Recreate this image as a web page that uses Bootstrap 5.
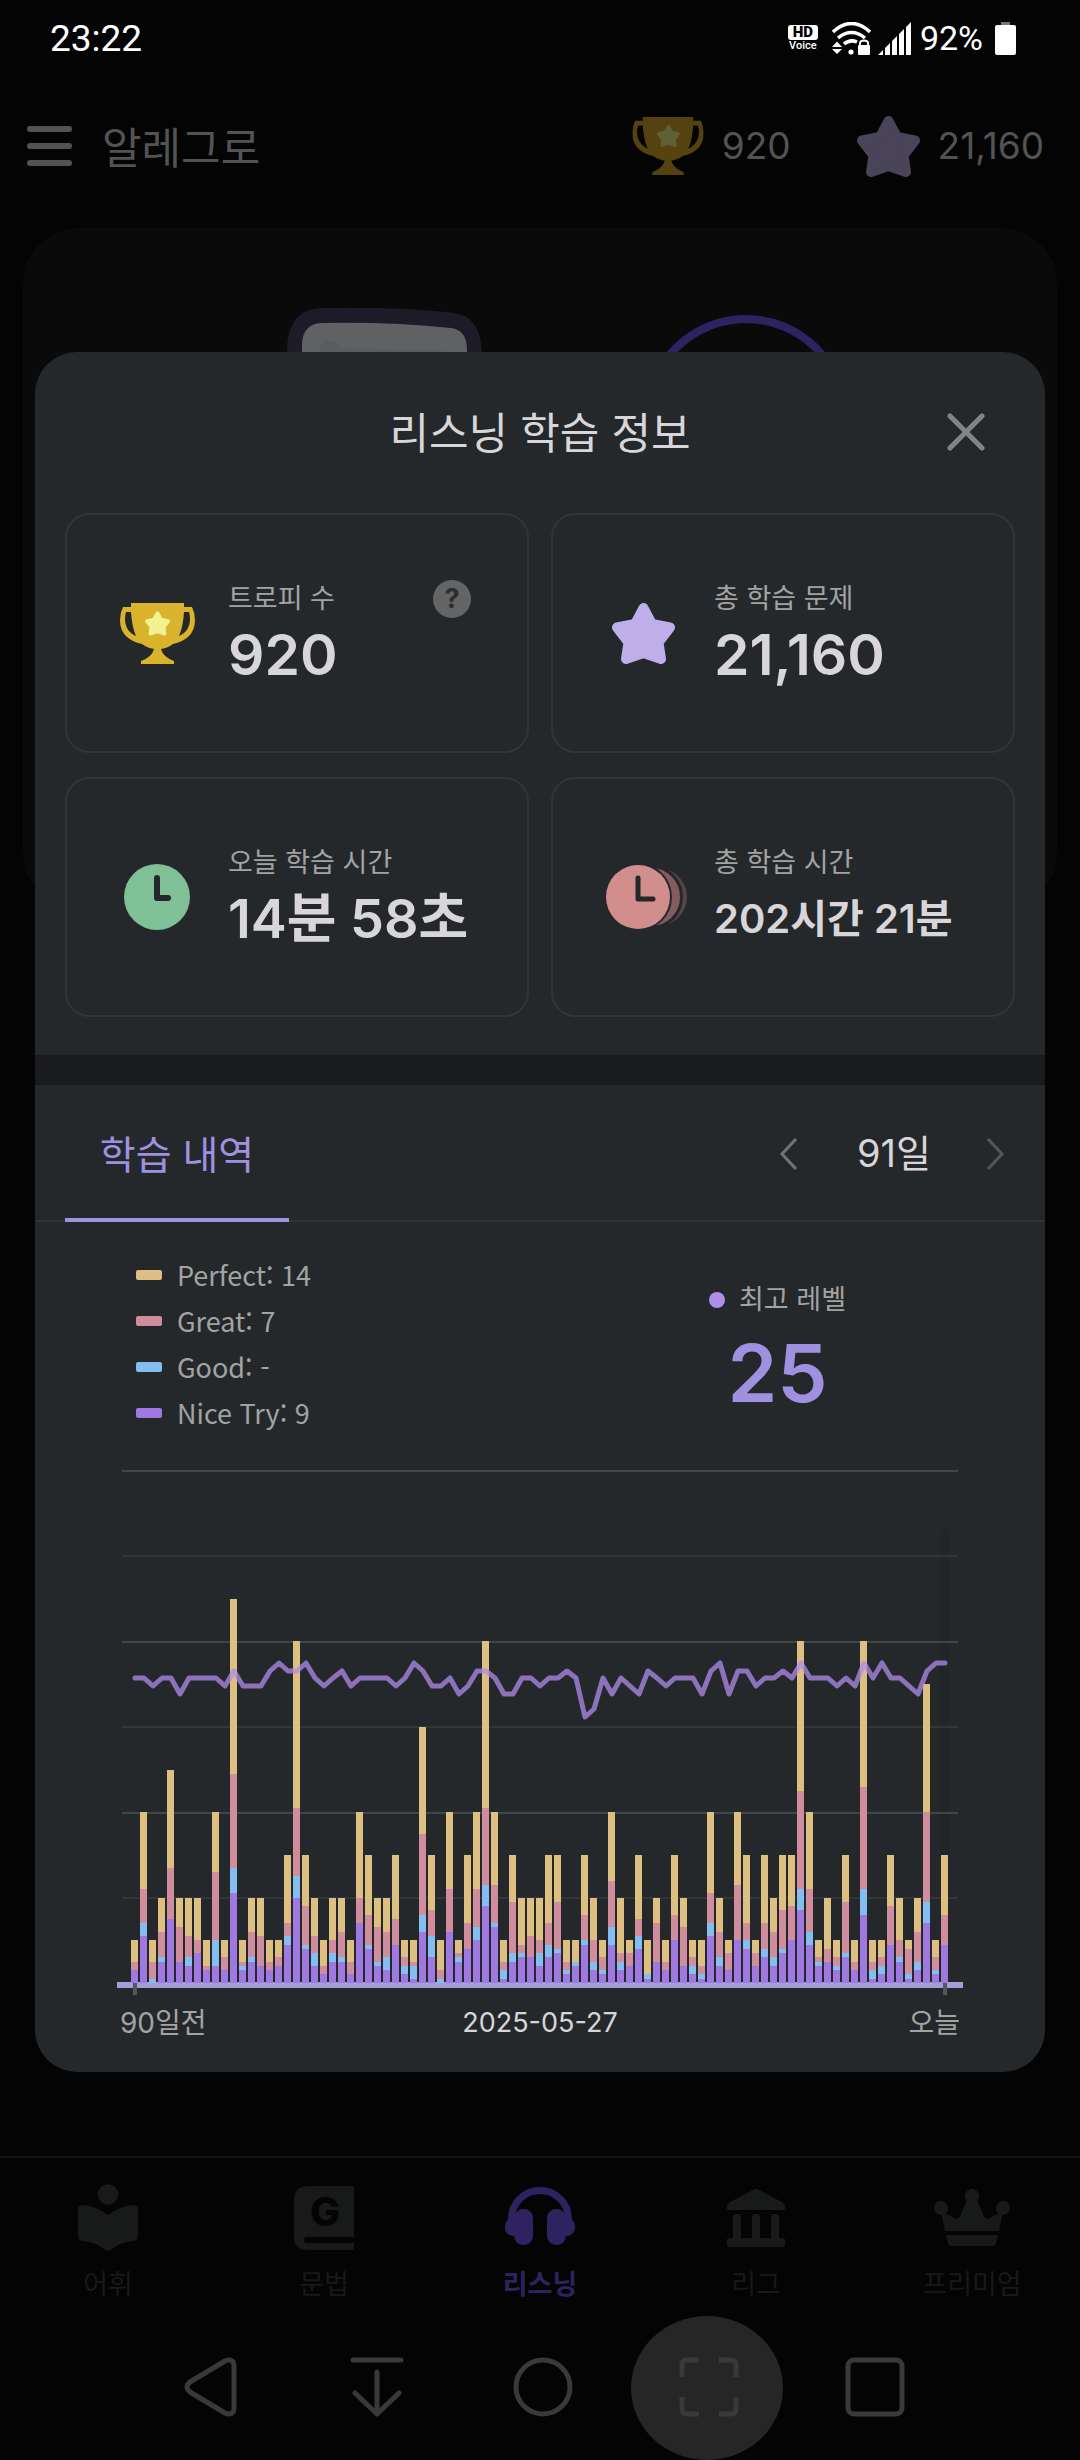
<!DOCTYPE html>
<html lang="ko">
<head>
<meta charset="utf-8">
<meta name="viewport" content="width=device-width, initial-scale=1">
<title>리스닝 학습 정보</title>
<link href="https://cdn.jsdelivr.net/npm/bootstrap@5.3.0/dist/css/bootstrap.min.css" rel="stylesheet">
<style>
  :root { --ink: #d8d6d8; --muted: #a2a3a3; --violet: #a091e0; --panel: #25282b; --rule: #323538; }
  body { background: #040404; color: var(--ink); font-family: Inter, "Noto Sans CJK KR", sans-serif; }
  svg { display: block; flex: none; }
  button { background: none; border: 0; padding: 0; color: inherit; }
  .screen { min-height: 100vh; }

  .status-bar { height: 74px; padding: 3px 64px 0 50px; color: #fff; font-family: Roboto, sans-serif; font-size: 37px; }
  .status-icons { gap: 7px; font-size: 34px; }
  .hd-voice { width: 30px; margin-right: 7px; line-height: 12px; font-size: 11px; font-weight: 500; }
  .hd-box { background: #fff; color: #000; border-radius: 3px; font-size: 15px; line-height: 15px; font-weight: 900; }
  .percent { margin: 0 5px 0 2px; }

  .app-header { height: 144px; padding: 0 36px 0 27px; color: #535354; font-size: 37px; }
  .app-name { font-size: 43px; line-height: 60px; padding-top: 4px; margin-left: 30px; }
  .score { gap: 18px; }
  .score-gap { margin-left: 66px; }

  .lesson-card { background: #0b0a0b; border-radius: 56px; margin: 10px 23px 0; height: 680px; }

  .info-dialog { top: 352px; left: 35px; right: 35px; background: var(--panel); border-radius: 42px; }
  .dialog-head { height: 161px; }
  .dialog-title { font-size: 43px; line-height: 60px; font-weight: 400; }
  .dialog-close { right: 60px; top: 61px; }
  .tiles { display: grid; grid-template-columns: repeat(2, minmax(0, 1fr)); gap: 24px 22px; padding: 0 30px 38px; }
  .tile { height: 240px; border: 2px solid var(--rule); border-radius: 24px; padding-right: 56px; }
  .tile-mark { width: 100px; margin: 0 21px 0 40px; }
  .tile-text { padding-top: 4px; }
  .tile-label { height: 40px; font-size: 27px; line-height: 40px; color: var(--muted); }
  .tile-value { height: 72px; font-size: 57px; line-height: 72px; font-weight: 600; white-space: nowrap; }
  .tile-value-md { font-size: 54px; }
  .tile-value-sm { font-size: 40px; }
  .help-btn { width: 38px; height: 38px; background: #636463; color: #2b2e30; font-size: 27px; line-height: 38px; font-weight: 700; }
  .divider-band { height: 30px; background: #1a1b1e; }

  .tab-row { height: 137px; padding: 0 40px 0 30px; border-bottom: 2px solid var(--rule); }
  .tab-on { width: 224px; margin-bottom: -2px; padding-top: 8px; border-bottom: 4px solid var(--violet); color: var(--violet); font-size: 39px; text-decoration: none; }
  .period { gap: 54px; padding-top: 2px; font-size: 38px; }
  .period span { padding-left: 4px; }

  .summary { padding: 30px 82px 0; height: 248px; }
  .legend-list { margin-left: 19px; font-family: "Noto Sans CJK KR", sans-serif; font-size: 27px; color: var(--muted); }
  .legend-list li { height: 46px; line-height: 46px; gap: 15px; }
  .swatch { width: 26px; height: 10px; border-radius: 2px; }
  .sw-perfect { background: #debf82; } .sw-great { background: #d08d9d; }
  .sw-good { background: #84bdf0; } .sw-nice { background: #a079e0; }
  .best { margin: 26px 117px 0 0; font-size: 27px; color: var(--muted); }
  .best-label { height: 44px; gap: 14px; }
  .best-dot { width: 16px; height: 16px; background: #ad8fea; border-radius: 50%; }
  .best-score { font-size: 80px; line-height: 102px; font-weight: 600; color: var(--violet); }
  .chart-box { padding: 0 82px; }
  .axis { padding: 5px 85px 26px; font-size: 28px; line-height: 46px; color: var(--muted); }
  .axis > span { flex: 1 1 0; }
  .axis .axis-date { font-size: 27px; color: #d6d6d6; }

  .tab-bar { height: 160px; border-top: 2px solid #0f1312; padding-top: 25px; }
  .tab-bar a { flex: 1 1 0; color: #181919; font-size: 27px; line-height: 44px; text-decoration: none; }
  .tab-bar a.current { color: #2e2360; font-weight: 700; }
  .tab-bar svg { margin-bottom: 10px; fill: currentColor; }

  .system-nav { height: 144px; padding-left: 6px; color: #393939; }
  .system-nav button { width: 166px; height: 144px; padding-bottom: 2px; }
  .system-nav svg { fill: none; stroke: currentColor; stroke-width: 5; stroke-linecap: round; stroke-linejoin: round; }
  .system-nav .pressed { width: 152px; margin: 0 9px 0 5px; padding-left: 4px; background: #262626; border-radius: 50%; }
</style>
</head>
<body>
<svg width="0" height="0" class="position-absolute" aria-hidden="true">
  <symbol id="trophy" viewBox="0 0 75 61">
    <path fill-rule="evenodd" d="M11 0H64V4H72Q75 10 75 17C75 31 66 38 53 41Q48 45 41 46Q43 54 54 58V61H21V58Q32 54 34 46Q27 45 22 41C9 38 0 31 0 17Q0 10 3 4H11ZM6 9Q5 12 5 16C5 24 9 30 16 33Q12 24 11 9ZM69 9H64Q63 24 59 33C66 30 70 24 70 16Q70 12 69 9Z"/>
  </symbol>
  <symbol id="star" viewBox="0 0 63 61">
    <path d="M31.500 5L40 21L58 24.500L46.500 39.500L49 56L31.500 50L14 56L16.500 39.500L5 24.500L23 21Z" fill="currentColor" stroke="currentColor" stroke-width="10" stroke-linejoin="round"/>
  </symbol>
</svg>

<div class="screen d-flex flex-column position-relative overflow-hidden">
  <div class="status-bar d-flex align-items-center justify-content-between">
    <span>23:22</span>
    <div class="status-icons d-flex align-items-center">
      <div class="hd-voice text-center"><div class="hd-box">HD</div>Voice</div>
      <svg width="39" height="33" viewBox="0 0 39 33" fill="none" stroke="#fff">
        <path d="M1 10Q19.500-7 38 10" stroke-width="3.500"/><path d="M6 16Q19.500 5 33 16" stroke-width="3.500"/><path d="M12 22Q18 17 25 20" stroke-width="3.500"/>
        <path d="M0 25L5 19.500L10 25ZM0 27L5 32L10 27Z" fill="#fff" stroke="none"/><circle cx="19" cy="30" r="2.600" fill="#fff" stroke="none"/>
        <rect x="26" y="23" width="12" height="10" rx="1" fill="#fff" stroke="none"/><path d="M28 24V21Q28 18.500 32 18.500T36 21V24" stroke-width="2"/>
      </svg>
      <svg width="33" height="33" viewBox="0 0 33 33" fill="#fff"><path d="M0 33L5 28V33ZM7 33V26L12 21V33ZM14 33V19L19 14V33ZM21 33V12L26 7V33ZM28 33V5L33 0V33Z"/></svg>
      <span class="percent">92%</span>
      <svg width="21" height="33" viewBox="0 0 21 33"><rect x="6" width="9" height="3" fill="#777"/><rect y="3" width="21" height="30" rx="2" fill="#fff"/></svg>
    </div>
  </div>

  <header class="app-header d-flex align-items-center">
    <button type="button" aria-label="메뉴"><svg width="45" height="40" viewBox="0 0 45 40" stroke="#535354" stroke-width="6" stroke-linecap="round"><path d="M3 3H42M3 20H42M3 37H42"/></svg></button>
    <div class="app-name">알레그로</div>
    <div class="score d-flex align-items-center ms-auto">
      <svg width="72" height="58" viewBox="0 0 75 61"><use href="#trophy" fill="#54420f"/><use href="#star" x="26" y="8" width="24" height="24" color="#5f5f38"/></svg>
      <span>920</span>
    </div>
    <div class="score score-gap d-flex align-items-center">
      <svg width="63" height="61" color="#4a4459"><use href="#star"/></svg>
      <span>21,160</span>
    </div>
  </header>

  <section class="lesson-card" aria-hidden="true">
    <svg width="100%" height="300" viewBox="0 0 1034 300">
      <path d="M264 300V124Q264 80 300 80Q380 79 430 85Q459 87 459 130V300Z" fill="#1e1b29"/>
      <path d="M279 300V116Q280 95 300 95Q370 94 428 100Q444 102 444 122V300Z" fill="#5f6162"/>
      <path d="M296 300V126Q297 112 307 113Q316 114 318 120L444 124V300Z" fill="#585e60"/>
      <circle cx="723" cy="190" r="99" fill="none" stroke="#2d2360" stroke-width="8"/>
    </svg>
  </section>

  <nav class="tab-bar d-flex mt-auto">
    <a href="#" class="d-flex flex-column align-items-center"><svg width="80" height="70"><circle cx="40" cy="11.500" r="10.300"/><path d="M40 32Q28 23 15 22Q10 22 10 27V53Q10 58 15 58Q30 60 37 67Q40 68.500 43 67Q50 60 65 58Q70 58 70 53V27Q70 22 65 22Q52 23 40 32Z"/></svg>어휘</a>
    <a href="#" class="d-flex flex-column align-items-center"><svg width="80" height="70"><path d="M24 3H67Q70 3 70 6V54H23Q20 54 20 57T23 60H70V64Q70 67 67 67H24Q10 67 10 53V17Q10 3 24 3Z"/><text x="41" y="43" text-anchor="middle" font-family="Inter" font-size="40" font-weight="800" fill="#040404">G</text></svg>문법</a>
    <a href="#" class="current d-flex flex-column align-items-center"><svg width="80" height="70"><path d="M11.500 40V36A28.500 28.500 0 0 1 68.500 36V40" fill="none" stroke="currentColor" stroke-width="7"/><rect x="14" y="26" width="19" height="36" rx="9"/><rect x="47" y="26" width="19" height="36" rx="9"/><rect x="5" y="35" width="18" height="18" rx="8"/><rect x="57" y="35" width="18" height="18" rx="8"/></svg>리스닝</a>
    <a href="#" class="d-flex flex-column align-items-center"><svg width="80" height="70"><path d="M37 7Q40 5 43 7L66 19Q69 21 69 24V27H11V24Q11 21 14 19Z"/><rect x="17" y="31" width="8" height="28" rx="3"/><rect x="36" y="31" width="8" height="28" rx="3"/><rect x="55" y="31" width="8" height="28" rx="3"/><rect x="11" y="55" width="58" height="9" rx="2"/></svg>리그</a>
    <a href="#" class="d-flex flex-column align-items-center"><svg width="80" height="70"><circle cx="40" cy="13" r="7"/><circle cx="9" cy="25" r="7"/><circle cx="71" cy="25" r="7"/><path d="M9 28L24 36Q27 36 28 33L36 15H44L52 33Q53 36 56 36L71 28L67 48H13ZM14 52H66L64 60Q64 63 61 63H19Q16 63 16 60Z"/></svg>프리미엄</a>
  </nav>

  <div class="system-nav d-flex justify-content-center">
    <button type="button" aria-label="뒤로" class="d-flex align-items-center justify-content-center"><svg width="60" height="60"><path d="M48 3Q53 3 53 9V51Q53 57 48 57Q46 57 44 56L9 35Q3 30 9 25L44 4Q46 3 48 3Z"/></svg></button>
    <button type="button" aria-label="내리기" class="d-flex align-items-center justify-content-center"><svg width="60" height="60"><path d="M6 3H54M30 15V56M8 36L30 57L52 36"/></svg></button>
    <button type="button" aria-label="홈" class="d-flex align-items-center justify-content-center"><svg width="60" height="60"><circle cx="30" cy="30" r="27"/></svg></button>
    <button type="button" aria-label="캡처" class="pressed d-flex align-items-center justify-content-center"><svg width="60" height="60"><path stroke-linecap="butt" d="M20 3H8Q3 3 3 8V20M40 3H52Q57 3 57 8V20M57 40V52Q57 57 52 57H40M20 57H8Q3 57 3 52V40"/></svg></button>
    <button type="button" aria-label="최근 앱" class="d-flex align-items-center justify-content-center"><svg width="60" height="60"><rect x="3" y="3" width="54" height="54" rx="6"/></svg></button>
  </div>

  <main class="info-dialog position-absolute overflow-hidden" role="dialog" aria-labelledby="dlg-title">
    <div class="dialog-head d-flex align-items-center justify-content-center position-relative">
      <h1 class="dialog-title m-0" id="dlg-title">리스닝 학습 정보</h1>
      <button type="button" class="dialog-close position-absolute" aria-label="닫기"><svg width="38" height="38" stroke="#80858a" stroke-width="5" stroke-linecap="round"><path d="M3 3L35 35M35 3L3 35"/></svg></button>
    </div>

    <div class="tiles">
      <div class="tile d-flex align-items-center">
        <div class="tile-mark d-flex justify-content-center"><svg width="75" height="61"><use href="#trophy" fill="#dab32c"/><use href="#star" x="25" y="8" width="25" height="25" color="#f2f291"/></svg></div>
        <div class="tile-text flex-grow-1">
          <div class="tile-label d-flex align-items-center justify-content-between">트로피 수<button type="button" class="help-btn rounded-circle" aria-label="도움말">?</button></div>
          <div class="tile-value">920</div>
        </div>
      </div>
      <div class="tile d-flex align-items-center">
        <div class="tile-mark d-flex justify-content-center"><svg width="63" height="61" color="#beaeea"><use href="#star"/></svg></div>
        <div class="tile-text flex-grow-1">
          <div class="tile-label">총 학습 문제</div>
          <div class="tile-value">21,160</div>
        </div>
      </div>
      <div class="tile d-flex align-items-center">
        <div class="tile-mark d-flex justify-content-center"><svg width="66" height="66"><circle cx="33" cy="33" r="33" fill="#7fc096"/><path d="M33 14V34H44" fill="none" stroke="#25282b" stroke-width="6" stroke-linecap="round" stroke-linejoin="round"/></svg></div>
        <div class="tile-text flex-grow-1">
          <div class="tile-label">오늘 학습 시간</div>
          <div class="tile-value tile-value-md">14분 58초</div>
        </div>
      </div>
      <div class="tile d-flex align-items-center">
        <div class="tile-mark d-flex justify-content-end"><svg width="87" height="64"><circle cx="52" cy="32" r="29" fill="#544547"/><circle cx="45" cy="32" r="30.500" fill="#835c5f" stroke="#25282b" stroke-width="3"/><circle cx="32" cy="32" r="34" fill="#25282b"/><circle cx="32" cy="32" r="32" fill="#d28d8d"/><path d="M32 13V34H47" fill="none" stroke="#25282b" stroke-width="5" stroke-linecap="round" stroke-linejoin="round"/></svg></div>
        <div class="tile-text flex-grow-1">
          <div class="tile-label">총 학습 시간</div>
          <div class="tile-value tile-value-sm">202시간 21분</div>
        </div>
      </div>
    </div>

    <div class="divider-band"></div>

    <div class="tab-row d-flex justify-content-between">
      <a href="#" class="tab-on d-flex align-items-center justify-content-center">학습 내역</a>
      <div class="period d-flex align-items-center">
        <button type="button" aria-label="이전"><svg width="20" height="32" fill="none" stroke="#6d757b" stroke-width="3"><path d="M17 1L3 16L17 31"/></svg></button>
        <span>91일</span>
        <button type="button" aria-label="다음"><svg width="20" height="32" fill="none" stroke="#50575c" stroke-width="3"><path d="M3 1L17 16L3 31"/></svg></button>
      </div>
    </div>

    <div class="summary d-flex justify-content-between">
      <ul class="legend-list list-unstyled">
        <li class="d-flex align-items-center"><span class="swatch sw-perfect"></span>Perfect: 14</li>
        <li class="d-flex align-items-center"><span class="swatch sw-great"></span>Great: 7</li>
        <li class="d-flex align-items-center"><span class="swatch sw-good"></span>Good: -</li>
        <li class="d-flex align-items-center"><span class="swatch sw-nice"></span>Nice Try: 9</li>
      </ul>
      <div class="best">
        <div class="best-label d-flex align-items-center"><span class="best-dot"></span>최고 레벨</div>
        <div class="best-score text-center">25</div>
      </div>
    </div>

    <div class="chart-box"><svg id="chart" width="100%" viewBox="0 0 846 525" role="img" aria-label="91일 학습 내역"></svg></div>
    <div class="axis d-flex align-items-center">
      <span>90일전</span>
      <span class="axis-date text-center">2025-05-27</span>
      <span class="text-end">오늘</span>
    </div>
  </main>
</div>

<script src="https://cdn.jsdelivr.net/npm/bootstrap@5.3.0/dist/js/bootstrap.bundle.min.js"></script>
<script>
  // Cumulative counts per day: nice try, good, great, perfect.
  const days = `3,3,5,10 11,14,22,40 0,1,5,10 5,6,12,20 15,15,27,50 5,5,13,20 4,6,11,20 7,7,10,20 3,3,4,10 4,10,26,40
    3,3,6,10 21,27,49,90 3,4,5,10 5,6,12,20 4,4,11,20 3,3,5,10 4,4,6,10 9,11,14,30 20,25,41,80 8,9,18,30
    4,7,11,20 2,2,4,10 5,7,10,20 5,6,12,20 2,2,5,10 14,14,20,40 8,9,16,30 4,5,13,20 3,6,12,20 9,9,15,30
    2,4,6,10 1,4,5,10 12,16,35,60 6,11,17,30 0,1,3,10 12,12,22,40 5,6,7,10 8,8,14,30 10,13,22,40 18,23,41,80
    13,14,23,40 1,3,5,10 5,7,19,30 6,7,9,20 6,6,11,20 4,7,10,20 6,9,14,30 7,8,19,30 2,3,5,10 4,5,5,10
    9,10,16,30 3,5,10,20 2,3,6,10 9,13,24,40 3,5,7,20 4,4,7,10 8,11,15,30 1,2,2,10 5,5,14,20 3,3,5,10
    10,10,16,30 4,4,13,20 2,4,6,10 1,2,4,10 11,14,21,40 4,6,12,20 3,3,7,10 10,10,23,40 8,10,14,30 4,4,7,10
    6,8,14,30 4,6,12,20 7,8,17,30 10,10,18,30 17,22,45,80 9,12,22,40 4,5,6,10 5,5,8,20 3,4,6,10 6,7,19,30
    3,3,5,10 16,22,46,80 1,3,5,10 2,4,6,10 9,9,18,30 5,6,10,20 1,2,8,10 3,5,12,20 14,19,40,70 2,3,6,10 9,9,16,30`
    .trim().split(/\s+/).map(d => d.split(',').map(Number));
  const levels = [23,23,22,23,23,21,23,23,23,23,22,24,22,22,22,24,25,24,24,25,23,22,23,24,22,23,23,23,23,22,
    23,25,24,22,22,23,21,22,24,24,23,21,21,23,23,22,23,23,24,23,18,19,23,21,23,22,21,24,23,22,
    23,23,23,21,24,25,21,24,24,22,23,23,24,23,25,23,23,23,22,23,22,25,23,25,23,23,22,21,24,25,25];
  const base = 513, pitch = 9, left = 14;
  const colors = ['#a079e0', '#84bdf0', '#d08d9d', '#debf82'];
  const y = n => Math.round(base - n * 4.27);
  let out = '<rect x="823" y="60" width="9" height="450" fill="#222528"/>';
  for (let i = 0; i < 6; i++)
    out += `<rect x="5" y="${Math.round(i * 85.4)}" width="836" height="2" fill="${i % 2 ? '#313638' : '#40464a'}"/>`;
  out += '<rect y="512" width="846" height="6" fill="#a29fd8"/>';
  days.forEach((d, k) => {
    let prev = 0;
    d.forEach((n, s) => {
      if (n > prev) out += `<rect x="${left + k * pitch}" y="${y(n)}" width="7" height="${y(prev) - y(n)}" fill="${colors[s]}"/>`;
      prev = n;
    });
  });
  const pts = levels.map((v, k) => `${left + 4 + k * pitch},${Math.round(193 + (25 - v) * 7.67)}`).join(' ');
  out += `<polyline points="${pts}" fill="none" stroke="#ad8beb" stroke-opacity=".75" stroke-width="5" stroke-linejoin="round" stroke-linecap="round"/>`;
  out += '<rect x="16" y="513" width="4" height="12" fill="#555759"/><rect x="826" y="513" width="4" height="12" fill="#555759"/>';
  document.getElementById('chart').innerHTML = out;
</script>
</body>
</html>
